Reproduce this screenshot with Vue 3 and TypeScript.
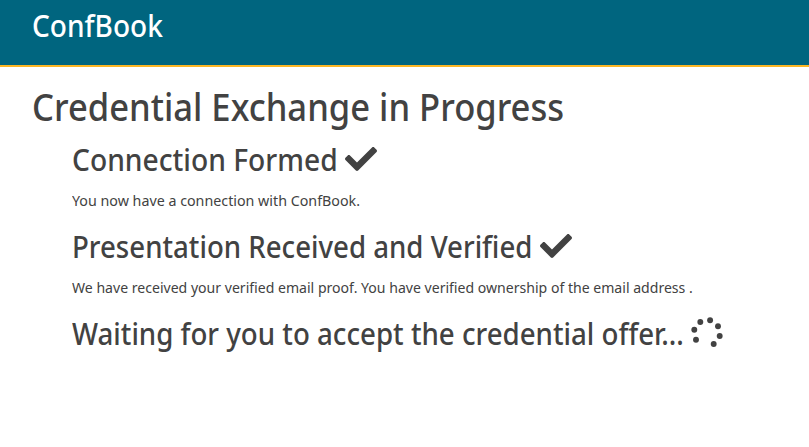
<script setup lang="ts">
interface Step {
  title: string
  kind: string
  detail?: string
}

const steps: Step[] = [
  { title: 'Connection Formed', kind: 'formed', detail: 'You now have a connection with ConfBook.' },
  {
    title: 'Presentation Received and Verified',
    kind: 'verified',
    detail: 'We have received your verified email proof. You have verified ownership of the email address .',
  },
  { title: 'Waiting for you to accept the credential offer...', kind: 'waiting' },
]
</script>

<template>
  <div class="page">
    <header class="topbar"><span class="brand">ConfBook</span></header>
    <main class="content">
      <h1>Credential Exchange in Progress</h1>
      <section v-for="step in steps" :key="step.kind" class="step" :class="step.kind">
        <h2>
          <span class="title">{{ step.title }}</span>
          <svg v-if="step.detail" class="icon" viewBox="0 0 512 512" aria-hidden="true">
            <path d="M173.898 439.404l-166.4-166.4c-9.997-9.997-9.997-26.206 0-36.204l36.203-36.204c9.997-9.998 26.207-9.998 36.204 0L192 312.69 432.095 72.596c9.997-9.997 26.207-9.997 36.204 0l36.203 36.204c9.997 9.997 9.997 26.206 0 36.204l-294.4 294.401c-9.998 9.997-26.207 9.997-36.204-.001z" />
          </svg>
          <svg v-else class="icon" viewBox="0 0 32 32" aria-hidden="true">
            <circle cx="9.3" cy="5" r="2.95" />
            <circle cx="19.1" cy="3.3" r="2.95" />
            <circle cx="27" cy="9.3" r="2.95" />
            <circle cx="28.7" cy="19" r="2.95" />
            <circle cx="22.7" cy="27" r="2.95" />
            <circle cx="5" cy="22.7" r="2.95" />
            <circle cx="3.3" cy="12.7" r="2.95" />
          </svg>
        </h2>
        <p v-if="step.detail">{{ step.detail }}</p>
      </section>
    </main>
  </div>
</template>

<style>
body {
  background: #fff;
}
</style>

<style scoped>
.page {
  min-height: 447px;
  overflow: hidden;
  color: #424242;
  font-family: 'Noto Sans', 'Open Sans', sans-serif;
  font-size: 15px;
}
.topbar {
  box-sizing: border-box;
  height: 67px;
  padding: 8px 32px 0;
  background: #00657f;
  border-bottom: 2px solid #fcb624;
  color: #fff;
}
.brand {
  display: block;
  font-size: 30px;
  font-weight: 500;
  line-height: 36px;
  transform: scaleX(0.935);
  transform-origin: 0 0;
}
.content {
  padding: 17px 32px 0;
}
h1,
h2,
p {
  margin: 0;
  white-space: nowrap;
}
h1 {
  height: 48px;
  margin-bottom: 9px;
  font-size: 37.5px;
  font-weight: 500;
  line-height: 46px;
  transform: scaleX(0.922);
  transform-origin: 0 0;
}
.step {
  height: 87px;
  padding-left: 40px;
}
h2 {
  display: flex;
  gap: 7px;
  height: 39px;
  margin-bottom: 8px;
  font-size: 30px;
  font-weight: 500;
  line-height: 37px;
}
.title {
  flex: none;
  width: 612px;
  transform: scaleX(0.9225);
  transform-origin: 0 0;
}
.formed .title {
  width: 265.5px;
  transform: scaleX(0.94);
}
.verified .title {
  width: 460.5px;
  transform: scaleX(0.921);
}
p {
  line-height: 24px;
  transform: scaleX(0.951);
  transform-origin: 0 0;
}
.verified p {
  transform: scaleX(0.938);
}
.icon {
  flex: none;
  width: 32px;
  height: 32px;
  margin-top: 2px;
  fill: currentColor;
}
</style>
